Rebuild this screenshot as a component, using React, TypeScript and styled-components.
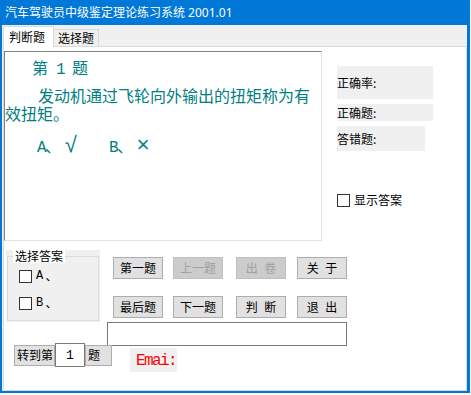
import React from "react";
import styled, { createGlobalStyle } from "styled-components";

const GlobalStyle = createGlobalStyle`
  html, body { margin: 0; padding: 0; background: #ffffff; }
  body { font-family: "Noto Sans CJK SC", sans-serif; font-size: 12px; color: #000; }
  * { box-sizing: border-box; }
`;

const CJK = `"Noto Sans CJK SC", sans-serif`;
const UI = `"Noto Sans", "Noto Sans CJK SC", sans-serif`;
const MONO = `"Liberation Mono", "Noto Sans CJK SC", monospace`;

const Window = styled.div`
  width: 470px;
  height: 393px;
  display: flex;
  flex-direction: column;
  border-left: 2px solid #0078d7;
  border-right: 3px solid #0078d7;
  border-bottom: 2px solid #0078d7;
  background: #f0f0f0;
`;

const TitleBar = styled.div`
  height: 25px;
  flex: none;
  display: flex;
  align-items: center;
  padding-left: 3px;
  background: #0078d7;
  color: #ffffff;
  font-family: ${UI};
  font-size: 12px;
  line-height: 14px;
  white-space: nowrap;
`;

const Client = styled.div`
  flex: 1;
  display: flex;
  flex-direction: column;
  padding-left: 1px;
  min-height: 0;
`;

const TabStrip = styled.div`
  height: 21px;
  flex: none;
  display: flex;
  align-items: flex-end;
`;

const Tab = styled.div<{ $active?: boolean }>`
  position: relative;
  z-index: 1;
  display: flex;
  align-items: center;
  font-family: ${CJK};
  font-size: 12px;
  line-height: 14px;
  border: 1px solid #d9d9d9;
  border-bottom: none;
  width: ${(p) => (p.$active ? "51px" : "45px")};
  height: ${(p) => (p.$active ? "21px" : "17px")};
  margin-bottom: ${(p) => (p.$active ? "-1px" : "0")};
  background: ${(p) => (p.$active ? "#ffffff" : "#f0f0f0")};
  padding-left: ${(p) => (p.$active ? "5px" : "4px")};
  border-left: ${(p) => (p.$active ? "1px solid #d9d9d9" : "none")};
`;

const Page = styled.div`
  flex: 1;
  display: flex;
  flex-direction: column;
  background: #ffffff;
  border: 1px solid #d9d9d9;
  padding-top: 4px;
  min-height: 0;
`;

const TopRow = styled.div`
  display: flex;
  align-items: flex-start;
`;

const QuestionBox = styled.div`
  width: 318px;
  height: 190px;
  flex: none;
  border-style: solid;
  border-width: 1px;
  border-color: #828282 #e3e3e3 #e3e3e3 #828282;
  padding-top: 6px;
  color: #008080;
  font-family: ${CJK};
  font-size: 16px;
  line-height: 18px;
`;

const QTitle = styled.div`
  padding-left: 27px;
  white-space: pre;
`;

const Latin = styled.span`
  font-family: ${MONO};
  letter-spacing: -1.6px;
`;

const Mark = styled.span`
  display: inline-block;
  width: 16px;
  margin-left: 2px;
  font-family: ${MONO};
  font-size: 22px;
  line-height: 18px;
  text-align: center;
`;

const QBody = styled.div`
  margin-top: 7px;
  text-indent: 33px;
`;

const Options = styled.div`
  margin-top: 14px;
  padding-left: 32px;
  display: flex;
  align-items: center;
`;

const Option = styled.span`
  width: 72px;
  white-space: nowrap;
`;

const Stats = styled.div`
  margin-left: 15px;
  padding-top: 15px;
  display: flex;
  flex-direction: column;
  align-items: flex-start;
`;

const StatLabel = styled.div<{ $w: number; $h: number }>`
  width: ${(p) => p.$w}px;
  height: ${(p) => p.$h}px;
  margin-bottom: 5px;
  display: flex;
  align-items: center;
  background: #f0f0f0;
  font-family: ${CJK};
  font-size: 12px;
  line-height: 14px;
  white-space: nowrap;
`;

const CheckRow = styled.label<{ $top?: number }>`
  display: flex;
  align-items: center;
  gap: 4px;
  margin-top: ${(p) => p.$top ?? 0}px;
  font-family: ${CJK};
  font-size: 12px;
  line-height: 14px;
  white-space: nowrap;
`;

const Box = styled.span`
  width: 13px;
  height: 13px;
  flex: none;
  border: 1px solid #333333;
  background: #ffffff;
`;

const MiddleRow = styled.div`
  margin-top: 9px;
  display: flex;
  align-items: flex-start;
`;

const GroupBox = styled.div`
  position: relative;
  margin-left: 2px;
  width: 94px;
  height: 72px;
  flex: none;
  background: #f0f0f0;
  padding: 6px 1px 1px 1px;
`;

const GroupFrame = styled.div`
  height: 100%;
  border: 1px solid #dcdcdc;
  padding: 12px 0 0 11px;
  display: flex;
  flex-direction: column;
  gap: 13px;
`;

const GroupTitle = styled.span`
  position: absolute;
  left: 7px;
  top: -1px;
  padding: 0 2px;
  background: #ffffff;
  font-family: ${CJK};
  font-size: 12px;
  line-height: 14px;
`;

const RightBlock = styled.div`
  margin-left: 7px;
  display: flex;
  flex-direction: column;
`;

const ButtonGrid = styled.div`
  display: grid;
  grid-template-columns: 60px 63px 61px 50px;
  row-gap: 17px;
  padding: 7px 0 0 6px;
`;

const Button = styled.button`
  width: 50px;
  height: 22px;
  padding: 0;
  margin: 0;
  border: 1px solid #adadad;
  background: #e1e1e1;
  color: #000000;
  font-family: ${CJK};
  font-size: 12px;
  line-height: 14px;
  word-spacing: 4px;
  white-space: pre;
  &:disabled {
    background: #cccccc;
    border-color: #bfbfbf;
    color: #a0a0a0;
  }
`;

const AnswerInput = styled.input`
  margin-top: 4px;
  width: 240px;
  height: 24px;
  padding: 0;
  border: 1px solid #7a7a7a;
  background: #ffffff;
  outline: none;
`;

const BottomRow = styled.div`
  margin-top: -3px;
  display: flex;
  align-items: flex-start;
`;

const GotoGroup = styled.div`
  margin-left: 10px;
  display: flex;
  align-items: center;
`;

const GotoButton = styled.button<{ $w: number }>`
  width: ${(p) => p.$w}px;
  height: 21px;
  padding: 0 0 0 2px;
  margin: 0;
  border: 1px solid #adadad;
  background: #e1e1e1;
  color: #000;
  text-align: left;
  font-family: ${CJK};
  font-size: 12px;
  line-height: 14px;
`;

const GotoInput = styled.input`
  width: 30px;
  height: 24px;
  padding: 0;
  margin: 0;
  border: 1px solid #7a7a7a;
  background: #ffffff;
  text-align: center;
  font-family: ${MONO};
  font-size: 13px;
  color: #000;
  outline: none;
`;

const EmailLabel = styled.div`
  margin-left: 18px;
  margin-top: 5px;
  width: 47px;
  height: 24px;
  padding: 5px 0 0 6px;
  background: #f0f0f0;
  color: #ff0000;
  font-family: ${MONO};
  font-size: 16px;
  line-height: 16px;
  letter-spacing: -1.6px;
  white-space: nowrap;
`;

export default function App() {
  return (
    <>
      <GlobalStyle />
      <Window>
        <TitleBar>汽车驾驶员中级鉴定理论练习系统 2001.01</TitleBar>
        <Client>
          <TabStrip>
            <Tab $active>判断题</Tab>
            <Tab>选择题</Tab>
          </TabStrip>
          <Page>
            <TopRow>
              <QuestionBox>
                <QTitle>
                  第<Latin> 1 </Latin>题
                </QTitle>
                <QBody>发动机通过飞轮向外输出的扭矩称为有效扭矩。</QBody>
                <Options>
                  <Option>
                    <Latin>A</Latin>、<Mark>√</Mark>
                  </Option>
                  <Option>
                    <Latin>B</Latin>、<Mark>×</Mark>
                  </Option>
                </Options>
              </QuestionBox>
              <Stats>
                <StatLabel $w={96} $h={33}>正确率:</StatLabel>
                <StatLabel $w={96} $h={17}>正确题:</StatLabel>
                <StatLabel $w={88} $h={25}>答错题:</StatLabel>
                <CheckRow $top={37}>
                  <Box />
                  显示答案
                </CheckRow>
              </Stats>
            </TopRow>
            <MiddleRow>
              <GroupBox>
                <GroupTitle>选择答案</GroupTitle>
                <GroupFrame>
                  <CheckRow>
                    <Box />
                    <Latin>A</Latin>、
                  </CheckRow>
                  <CheckRow>
                    <Box />
                    <Latin>B</Latin>、
                  </CheckRow>
                </GroupFrame>
              </GroupBox>
              <RightBlock>
                <ButtonGrid>
                  <Button>第一题</Button>
                  <Button disabled>上一题</Button>
                  <Button disabled>出 卷</Button>
                  <Button>关 于</Button>
                  <Button>最后题</Button>
                  <Button>下一题</Button>
                  <Button>判 断</Button>
                  <Button>退 出</Button>
                </ButtonGrid>
                <AnswerInput readOnly defaultValue="" />
              </RightBlock>
            </MiddleRow>
            <BottomRow>
              <GotoGroup>
                <GotoButton $w={41}>转到第</GotoButton>
                <GotoInput readOnly defaultValue="1" />
                <GotoButton $w={27}>题</GotoButton>
              </GotoGroup>
              <EmailLabel>Emai:</EmailLabel>
            </BottomRow>
          </Page>
        </Client>
      </Window>
    </>
  );
}
